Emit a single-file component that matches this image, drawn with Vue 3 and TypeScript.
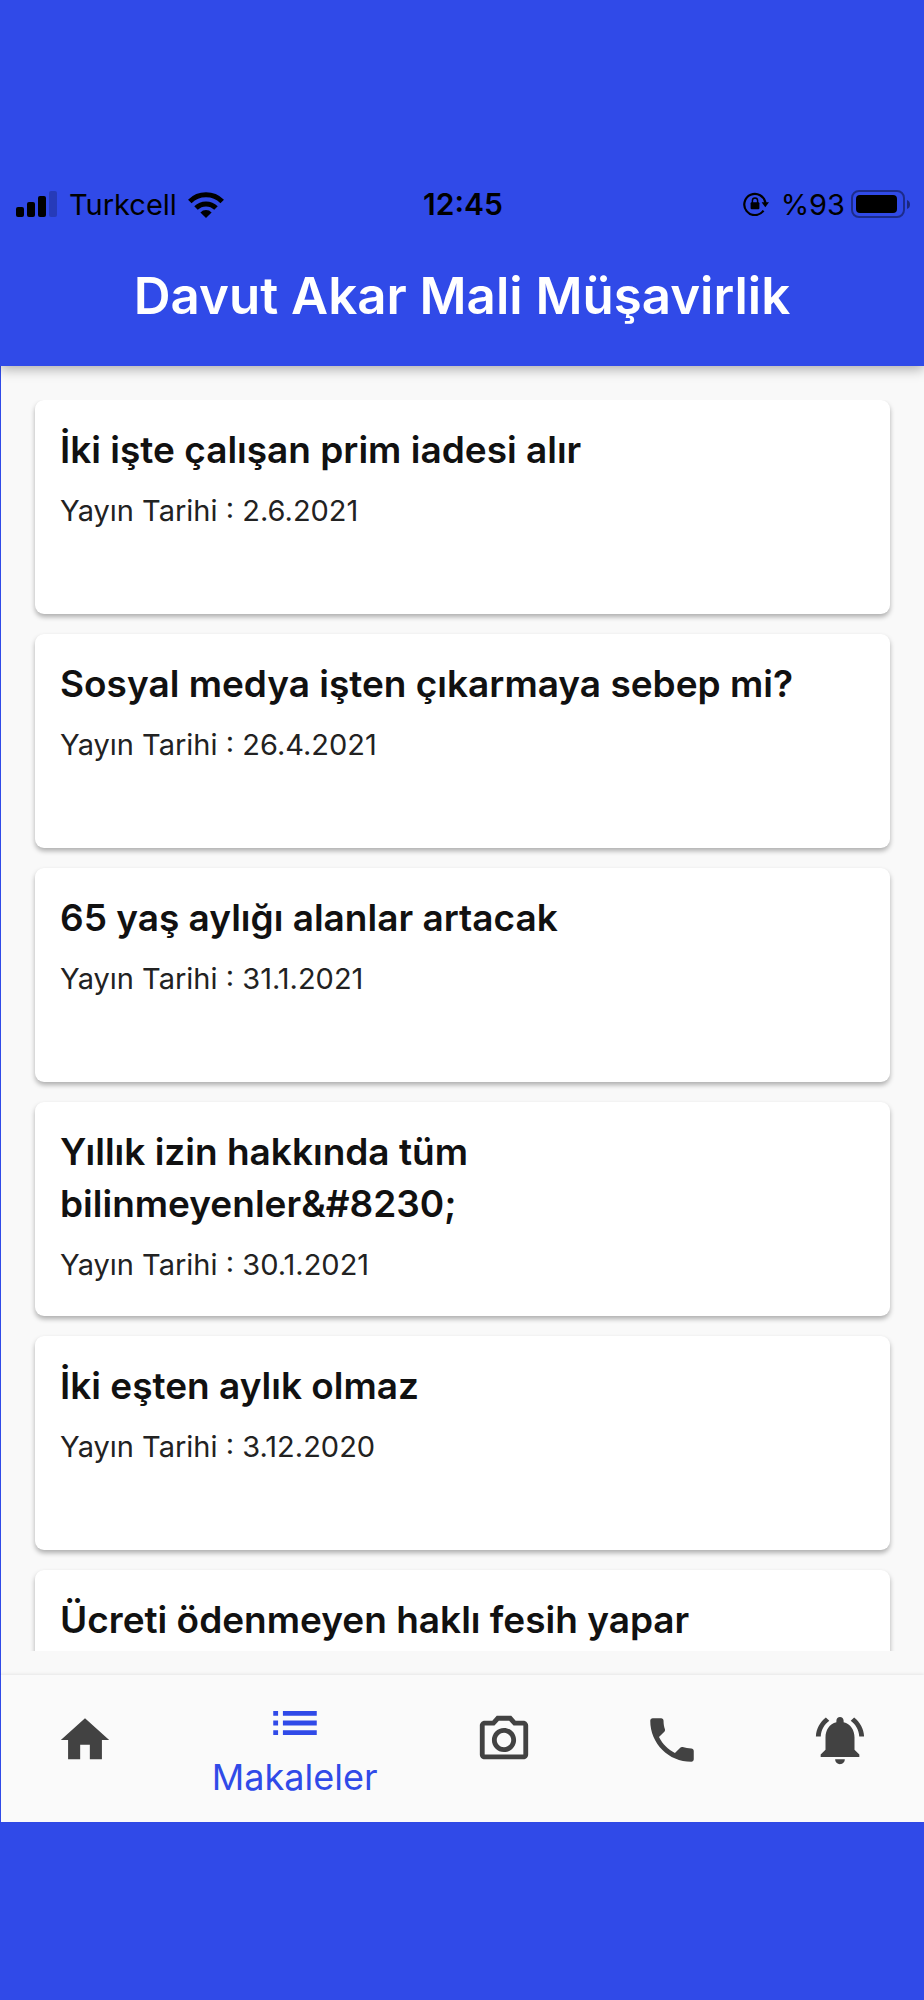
<script setup lang="ts">
import { ref } from 'vue'

interface Article {
  title: string
  date?: string
}

interface Tab {
  id: string
  label: string
  paths: string[]
}

const articles: Article[] = [
  { title: 'İki işte çalışan prim iadesi alır', date: '2.6.2021' },
  { title: 'Sosyal medya işten çıkarmaya sebep mi?', date: '26.4.2021' },
  { title: '65 yaş aylığı alanlar artacak', date: '31.1.2021' },
  { title: 'Yıllık izin hakkında tüm bilinmeyenler&#8230;', date: '30.1.2021' },
  { title: 'İki eşten aylık olmaz', date: '3.12.2020' },
  { title: 'Ücreti ödenmeyen haklı fesih yapar' },
]

const tabs: Tab[] = [
  { id: 'home', label: 'Ana Sayfa', paths: ['M10 20v-6h4v6h5v-8h3L12 3 2 12h3v8z'] },
  {
    id: 'articles',
    label: 'Makaleler',
    paths: ['M3 13h2v-2H3v2zm0 4h2v-2H3v2zm0-8h2V7H3v2zm4 4h14v-2H7v2zm0 4h14v-2H7v2zM7 7v2h14V7H7z'],
  },
  {
    id: 'camera',
    label: 'Kamera',
    paths: [
      'M14.12 4l1.83 2H20v12H4V6h4.05l1.83-2h4.24M15 2H9L7.17 4H4c-1.1 0-2 .9-2 2v12c0 1.1.9 2 2 2h16c1.1 0 2-.9 2-2V6c0-1.1-.9-2-2-2h-3.17L15 2zm-3 7c1.65 0 3 1.35 3 3s-1.35 3-3 3-3-1.35-3-3 1.35-3 3-3m0-2c-2.76 0-5 2.24-5 5s2.24 5 5 5 5-2.24 5-5-2.24-5-5-5z',
    ],
  },
  {
    id: 'phone',
    label: 'Telefon',
    paths: [
      'M20 15.500c-1.250 0-2.450-.2-3.570-.57-.1-.03-.21-.05-.31-.05-.26 0-.51.1-.71.29l-2.200 2.200c-2.830-1.440-5.150-3.750-6.590-6.590l2.200-2.200c.28-.28.36-.67.25-1.020C8.700 6.450 8.500 5.250 8.500 4c0-.55-.45-1-1-1H4c-.55 0-1 .45-1 1 0 9.390 7.610 17 17 17 .55 0 1-.45 1-1v-3.500c0-.55-.45-1-1-1z',
    ],
  },
  {
    id: 'alerts',
    label: 'Bildirimler',
    paths: [
      'M7.58 4.08L6.15 2.65C3.75 4.48 2.17 7.3 2.03 10.5h2c.15-2.65 1.51-4.97 3.55-6.42zm12.39 6.42h2c-.15-3.2-1.73-6.02-4.12-7.85l-1.42 1.43c2.02 1.45 3.39 3.77 3.54 6.42zM18 11c0-3.07-1.64-5.64-4.5-6.32V4c0-.83-.67-1.5-1.5-1.5s-1.5.67-1.5 1.5v.68C7.63 5.36 6 7.92 6 11v5l-2 2v1h16v-1l-2-2v-5zm-6 11c.14 0 .27-.01.4-.04.65-.14 1.18-.58 1.44-1.18.1-.24.15-.5.15-.78h-4c.01 1.1.9 2 2.01 2z',
    ],
  },
]

const active = ref<string>('articles')
</script>

<template>
  <div class="screen">
    <header class="top">
      <div class="status">
        <div class="side">
          <svg class="signal" viewBox="0 0 42 26" aria-hidden="true">
            <rect x="0" y="16" width="8" height="10" rx="2" />
            <rect x="11" y="11" width="8" height="15" rx="2" />
            <rect x="22" y="5" width="8" height="21" rx="2" />
            <rect x="33" y="0" width="8" height="26" rx="2" opacity="0.2" />
          </svg>
          <span>Turkcell</span>
          <svg class="wifi" viewBox="0 0 36 27" aria-hidden="true">
            <g fill="none" stroke="#000" stroke-width="5">
              <path d="M1.8 10.4a23 23 0 0 1 32.4 0" />
              <path d="M8 17a14.4 14.4 0 0 1 20 0" />
            </g>
            <path d="M18 27l-5.6-5.6a8 8 0 0 1 11.2 0z" />
          </svg>
        </div>
        <time class="clock">12:45</time>
        <div class="side right">
          <svg class="lock" viewBox="0 0 26 24" aria-hidden="true">
            <path d="M20.5 18.7A10.6 10.6 0 1 1 22.4 11" fill="none" stroke="#000" stroke-width="2.2" />
            <path d="M18.6 10.2h7.4l-3.7 5z" />
            <rect x="7.6" y="10.3" width="8.8" height="7" rx="1" />
            <path d="M9.4 11V8.6a2.6 2.6 0 0 1 5.2 0V11" fill="none" stroke="#000" stroke-width="1.5" />
          </svg>
          <span>%93</span>
          <svg class="battery" viewBox="0 0 59 29" aria-hidden="true">
            <rect x="1" y="1" width="52" height="26" rx="7" fill="none" stroke="#000" stroke-opacity="0.4" stroke-width="2" />
            <rect x="5" y="5" width="41" height="18" rx="4" />
            <path d="M56 10q3 1 3 4.500t-3 4.500z" opacity="0.45" />
          </svg>
        </div>
      </div>
      <h1>Davut Akar Mali Müşavirlik</h1>
    </header>

    <main class="content">
      <ul class="list">
        <li v-for="a in articles" :key="a.title" class="card">
          <h2>{{ a.title }}</h2>
          <p v-if="a.date">Yayın Tarihi : {{ a.date }}</p>
        </li>
      </ul>
    </main>

    <nav class="tabs">
      <button
        v-for="t in tabs"
        :key="t.id"
        type="button"
        class="tab"
        :class="{ active: active === t.id }"
        :aria-label="t.label"
        @click="active = t.id"
      >
        <svg viewBox="0 0 24 24" aria-hidden="true">
          <path v-for="p in t.paths" :key="p" :d="p" />
        </svg>
        <span v-if="active === t.id">{{ t.label }}</span>
      </button>
    </nav>
  </div>
</template>

<style>
body {
  margin: 0;
  background: #304ae8;
}
</style>

<style scoped>
.screen {
  box-sizing: border-box;
  height: 100vh;
  padding: 168px 0 178px;
  display: flex;
  flex-direction: column;
  background: #304ae8;
  font-family: Inter, "Liberation Sans", sans-serif;
}

.top {
  position: relative;
  z-index: 1;
  flex: none;
  background: #304ae8;
  box-shadow: 0 3px 12px rgba(0, 0, 0, 0.32);
  clip-path: inset(0 0 -24px 0);
}

.status {
  display: grid;
  grid-template-columns: 1fr auto 1fr;
  align-items: center;
  height: 72px;
  padding: 0 14px 0 16px;
  font-size: 29px;
  color: #000;
}

.side {
  display: flex;
  align-items: center;
  gap: 11px;
}

.right {
  justify-content: flex-end;
  gap: 6px;
}

.clock {
  font-size: 30px;
  font-weight: 600;
}

.signal {
  width: 42px;
  height: 26px;
}

.wifi {
  width: 36px;
  height: 27px;
}

.lock {
  width: 26px;
  height: 24px;
  margin-right: 6px;
}

.battery {
  width: 59px;
  height: 29px;
}

h1 {
  margin: 0;
  padding: 20px 24px 34px;
  line-height: 72px;
  font-size: 51px;
  font-weight: 600;
  text-align: center;
  color: #fff;
}

.content {
  flex: 1;
  min-height: 0;
  padding: 34px 34px 24px;
  border-left: 1px solid #304ae8;
  background: #f9f9f9;
}

.list {
  display: flex;
  flex-direction: column;
  gap: 20px;
  height: 100%;
  margin: 0 -8px;
  padding: 0 8px;
  overflow: hidden;
  list-style: none;
}

.card {
  box-sizing: border-box;
  flex: none;
  min-height: 214px;
  padding: 24px 40px 24px 25px;
  border-radius: 9px;
  background: #fff;
  box-shadow: 0 3px 5px rgba(0, 0, 0, 0.3);
}

h2 {
  margin: 0 0 10px;
  line-height: 52px;
  font-size: 37px;
  font-weight: 600;
  color: #111;
}

p {
  margin: 0;
  line-height: 50px;
  font-size: 29px;
  font-weight: 400;
  color: #222;
}

.tabs {
  display: flex;
  flex: none;
  height: 147px;
  border-left: 1px solid #304ae8;
  background: #fafafa;
  box-shadow: 0 -1px 3px rgba(0, 0, 0, 0.08);
}

.tab {
  flex: 2 1 0;
  display: flex;
  flex-direction: column;
  align-items: center;
  justify-content: center;
  min-width: 0;
  padding: 0 0 18px;
  border: 0;
  background: none;
  font: inherit;
  font-size: 36px;
  line-height: 50px;
  color: #424242;
  cursor: pointer;
}

.tab.active {
  flex-grow: 3;
  padding-bottom: 2px;
  color: #304ae8;
}

.tab svg {
  width: 58px;
  height: 58px;
  fill: currentColor;
}
</style>
